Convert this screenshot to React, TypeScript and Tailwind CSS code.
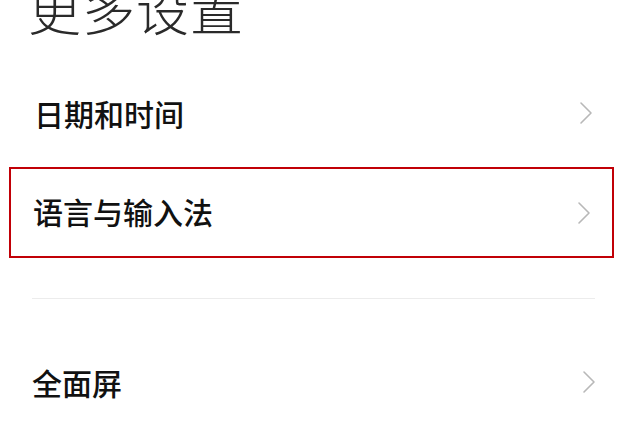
import React from "react";

const Chevron = () => (
  <svg width="14" height="24" viewBox="0 0 14 24" fill="none" className="shrink-0">
    <path d="M2 2 L12 12 L2 22" stroke="#b8b8b8" strokeWidth="1.6" strokeLinecap="round" strokeLinejoin="round" />
  </svg>
);

const font = { fontFamily: '"Noto Sans CJK SC", "Noto Sans", sans-serif' };

export default function App() {
  return (
    <div className="w-[627px] h-[447px] overflow-hidden bg-white" style={font}>
      <div className="mt-[-18px] h-[53px] pl-[28px] text-[53px] leading-[53px] font-light text-[#2a2a2a] tracking-[1px]">
        更多设置
      </div>
      <div className="mt-[33px] h-[90px] flex items-center justify-between pl-[34px] pr-[34px]">
        <span className="text-[30px] font-medium text-[#111]">日期和时间</span>
        <Chevron />
      </div>
      <div className="mt-[9px] mx-[9px] w-[605px] h-[91px] border-2 border-red-700 flex items-center justify-between pl-[22px] pr-[21px]">
        <span className="text-[30px] font-medium text-[#111] -mt-[2px]">语言与输入法</span>
        <Chevron />
      </div>
      <div className="mt-[40px] mx-[32px] h-px bg-[#ececec]" />
      <div className="mt-[38px] h-[90px] flex items-center justify-between pl-[32px] pr-[31px]">
        <span className="text-[30px] font-medium text-[#111]">全面屏</span>
        <Chevron />
      </div>
    </div>
  );
}
